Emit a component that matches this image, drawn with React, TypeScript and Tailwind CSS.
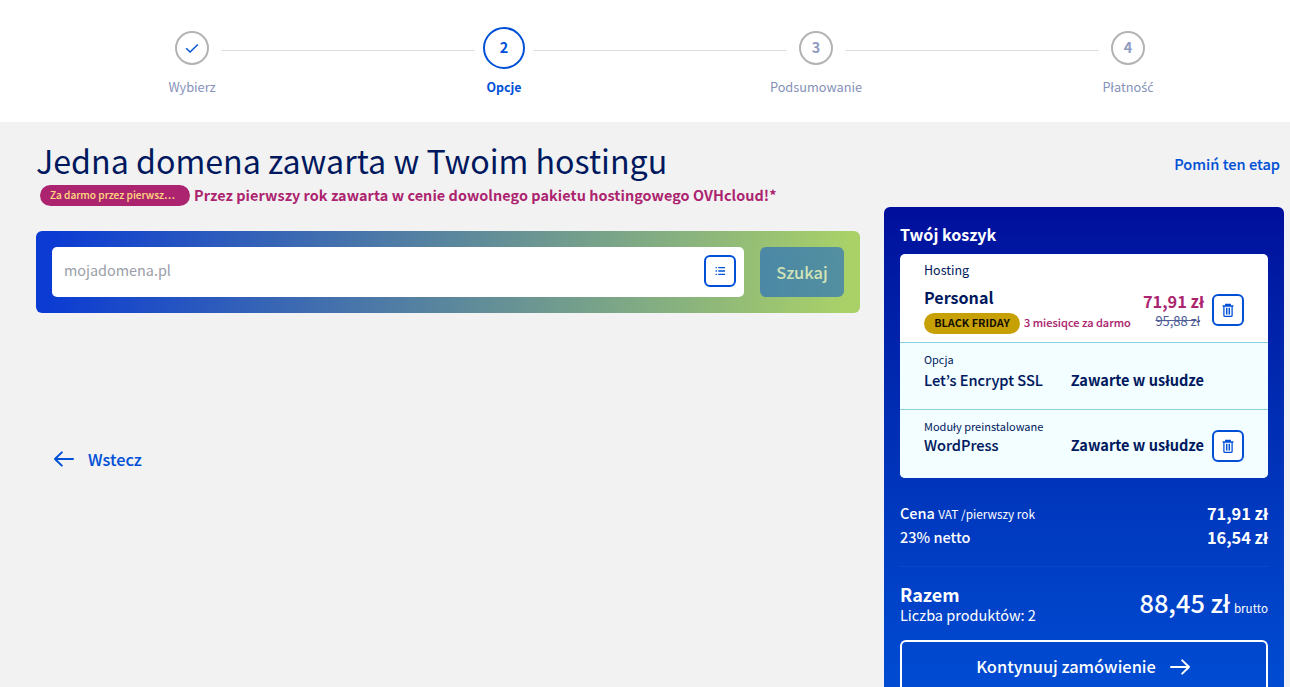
import type { ReactNode } from 'react';

const steps = [
  { id: 1, label: 'Wybierz', done: true },
  { id: 2, label: 'Opcje', active: true },
  { id: 3, label: 'Podsumowanie' },
  { id: 4, label: 'Płatność' },
];

// Polish letters the main font has no glyphs for
const Pl = ({ children }: { children: string }) => (
  <>
    {children.split(/([łśćą])/).map((part, i) =>
      i % 2 ? (
        <span key={i} className="font-['Noto_Sans','Open_Sans',sans-serif] leading-none">{part}</span>
      ) : (
        part
      )
    )}
  </>
);

const CheckIcon = () => (
  <svg width="16" height="16" viewBox="0 0 16 16" fill="none" stroke="#0050d7" strokeWidth="1.4">
    <path d="M2.2 8.2 6.1 12.1 13.8 4.4" />
  </svg>
);

const ListIcon = () => (
  <svg width="16" height="16" viewBox="0 0 16 16" fill="none" stroke="#0050d7" strokeWidth="1.3">
    <path d="M3.6 4.6h1.3M3.6 8h1.3M3.6 11.4h1.3M6.3 4.6H13M6.3 8H13M6.3 11.4H13" />
  </svg>
);

const TrashIcon = () => (
  <svg width="16" height="16" viewBox="0 0 16 16" fill="none" stroke="#0050d7" strokeWidth="1.3">
    <path d="M2.6 4h10.8M5.8 3.6V2.6h4.4v1" strokeWidth="1.5" />
    <path d="M3.9 4v9.4q0 1 1 1h6.2q1 0 1-1V4" />
    <path d="M6.7 5.8v6.6M9.3 5.8v6.6" strokeWidth="1.5" />
  </svg>
);

const ArrowIcon = ({ className }: { className?: string }) => (
  <svg className={className} width="20" height="16" viewBox="0 0 20 16" fill="none" stroke="currentColor" strokeWidth="2" strokeLinecap="round" strokeLinejoin="round">
    <path d="M1 8h18M12.2 1.4 19 8l-6.8 6.6" />
  </svg>
);

const IconButton = ({ children }: { children: ReactNode }) => (
  <button className="flex h-8 w-8 shrink-0 items-center justify-center rounded-md border-2 border-[#0050d7] bg-white">
    {children}
  </button>
);

const Stepper = () => (
  <header className="h-[122px] bg-white px-9 pt-[27px]">
    <ol className="grid w-[1248px] grid-cols-4">
      {steps.map((step, i) => (
        <li key={step.id}>
          <div className="grid h-[42px] grid-cols-[1fr_58px_1fr] items-center justify-items-center">
            <span className={`mt-[5px] h-px w-full ${i > 0 ? 'bg-[#dedede]' : ''}`} />
            <span
              className={
                step.active
                  ? 'flex h-[42px] w-[42px] items-center justify-center rounded-full border-2 border-[#0050d7] text-[14.4px] font-bold text-[#0050d7]'
                  : 'flex h-[34px] w-[34px] items-center justify-center rounded-full border-2 border-[#b3b3b3] text-[14.4px] font-bold text-[#8f9bc2]'
              }
            >
              {step.done ? <CheckIcon /> : <span className="pb-0.5 leading-5">{step.id}</span>}
            </span>
            <span className={`mt-[5px] h-px w-full ${i < steps.length - 1 ? 'bg-[#dedede]' : ''}`} />
          </div>
          <p
            className={
              step.active
                ? 'mt-2 text-center text-[12.4px] leading-5 font-bold text-[#0050d7]'
                : 'mt-2 text-center text-[12.75px] leading-5 text-[#8591b8]'
            }
          >
            <Pl>{step.label}</Pl>
          </p>
        </li>
      ))}
    </ol>
  </header>
);

const DomainSearch = () => (
  <section>
    <h1 className="mt-[18px] text-[32.2px] leading-10 text-[#00185e]">Jedna domena zawarta w Twoim hostingu</h1>
    <div className="mt-[5px] ml-1 flex h-[21px] items-start gap-1">
      <span className="h-[21px] w-[150px] rounded-full bg-[#ac246f] px-2.5 text-[10.1px] leading-[20px] font-medium text-[#ffd780] [-webkit-text-stroke:0.1px]">
        Za darmo przez pierwsz…
      </span>
      <p className="text-[14.4px] leading-5 font-bold tracking-[0.07px] text-[#ac246f]">
        Przez pierwszy rok zawarta w cenie dowolnego pakietu hostingowego OVHcloud!*
      </p>
    </div>
    <div className="mt-[25px] flex h-[82px] gap-4 rounded-md bg-[linear-gradient(95deg,#0b3bd3_2%,#a9d168_98%)] p-4">
      <div className="flex h-[50px] flex-1 items-center justify-between rounded-[5px] bg-white pr-2 pb-0.5 pl-3">
        <span className="pb-0.5 text-[14.4px] leading-5 text-[#9a9ea9]">mojadomena.pl</span>
        <IconButton>
          <ListIcon />
        </IconButton>
      </div>
      <button className="h-[50px] w-[84px] rounded-md bg-[#0050d7] text-[16.4px] font-medium text-white opacity-50">
        Szukaj
      </button>
    </div>
    <a className="mt-[134px] ml-[18px] flex items-center gap-3.5 text-[16.3px] leading-6 font-medium text-[#0050d7] [-webkit-text-stroke:0.1px]">
      <ArrowIcon className="rotate-180" />
      Wstecz
    </a>
  </section>
);

const Cart = () => (
  <aside className="h-[520px] rounded-md bg-gradient-to-b from-[#000e9c] to-[#0050d7] px-4 pt-4 text-white">
    <h2 className="mt-[-1px] text-[16.1px] leading-6 font-bold">Twój koszyk</h2>
    <div className="mt-2 h-[224px] overflow-hidden rounded-[5px] bg-white text-[#00185e]">
      <div className="h-[88px] px-6 pt-1.5">
        <p className="text-[12.5px] leading-5">Hosting</p>
        <div className="flex justify-between">
          <div>
            <p className="mt-[5px] text-[16.1px] leading-6 font-bold">Personal</p>
            <div className="mt-1 flex h-[21px] items-start gap-1">
              <span className="h-[21px] w-24 rounded-full bg-[#c7a006] text-center text-[10.9px] leading-[19px] font-bold text-[#141000]">
                BLACK FRIDAY
              </span>
              <span className="text-[11px] leading-[19px] font-medium text-[#ac246f] [-webkit-text-stroke:0.1px]">3 miesiqce za darmo</span>
            </div>
          </div>
          <div className="flex">
            <div className="mr-2 text-right">
              <p className="mt-[9px] text-[16.4px] leading-6 font-bold text-[#ac246f]"><Pl>71,91 zł</Pl></p>
              <p className="mt-[-1px] pr-1 text-[12.9px] leading-[18px] text-[#4d5c96] line-through"><Pl>95,88 zł</Pl></p>
            </div>
            <div className="mt-3.5">
              <IconButton>
                <TrashIcon />
              </IconButton>
            </div>
          </div>
        </div>
      </div>
      <div className="h-[67px] border-t border-[#85d1e0] bg-[#f2feff] px-6 pt-[7px]">
        <p className="text-[10.9px] leading-[18px]">Opcja</p>
        <div className="flex justify-between pr-10 leading-6">
          <span className="text-[14.6px] font-medium [-webkit-text-stroke:0.1px]">Let’s Encrypt SSL</span>
          <span className="text-[14.55px] font-bold"><Pl>Zawarte w usłudze</Pl></span>
        </div>
      </div>
      <div className="h-[69px] border-t border-[#85d1e0] bg-[#f2feff] px-6 pt-[7px]">
        <p className="text-[11px] leading-[18px]"><Pl>Moduły preinstalowane</Pl></p>
        <div className="mt-[-5px] flex h-8 items-center justify-between leading-6">
          <span className="pb-0.5 text-[14.6px] font-medium [-webkit-text-stroke:0.1px]">WordPress</span>
          <div className="flex items-center gap-2">
            <span className="pb-0.5 text-[14.55px] font-bold"><Pl>Zawarte w usłudze</Pl></span>
            <IconButton>
              <TrashIcon />
            </IconButton>
          </div>
        </div>
      </div>
    </div>
    <div className="mt-[23px] leading-6">
      <div className="flex h-6 items-center justify-between">
        <span className="text-[14.5px] font-medium">
          Cena <span className="text-[11.8px] font-normal">VAT /pierwszy rok</span>
        </span>
        <span className="text-[16.4px] font-bold"><Pl>71,91 zł</Pl></span>
      </div>
      <div className="flex h-6 items-center justify-between">
        <span className="text-[14.5px] font-medium">23% netto</span>
        <span className="text-[16.4px] font-bold"><Pl>16,54 zł</Pl></span>
      </div>
    </div>
    <hr className="mt-[17px] border-[#0a47cd]" />
    <div className="mt-[15px] flex justify-between">
      <div>
        <p className="text-[18px] leading-6 font-bold">Razem</p>
        <p className="text-[14.5px] leading-[18px]">Liczba produktów: 2</p>
      </div>
      <div className="mt-1 flex items-baseline gap-1">
        <span className="text-[25.4px] leading-8 font-medium"><Pl>88,45 zł</Pl></span>
        <span className="text-[11.6px]">brutto</span>
      </div>
    </div>
    <button className="mt-4 flex h-[54px] w-full items-center justify-center gap-3.5 rounded-md border-2 border-white pr-0.5 pb-0.5 text-[16.4px] font-medium">
      Kontynuuj zamówienie
      <ArrowIcon className="mt-0.5" />
    </button>
  </aside>
);

const App = () => (
  <div className="h-[687px] w-[1290px] overflow-hidden bg-[#f2f2f2] font-['Noto_Sans_CJK_JP','Noto_Sans',sans-serif]">
    <Stepper />
    <main className="grid grid-cols-[824px_400px] gap-6 pl-9">
      <DomainSearch />
      <div>
        <div className="flex h-[85px] justify-end pt-[30px] pr-1">
          <a className="text-[14.6px] leading-6 font-medium text-[#0050d7] [-webkit-text-stroke:0.1px]">Pomiń ten etap</a>
        </div>
        <Cart />
      </div>
    </main>
  </div>
);

export default App;
